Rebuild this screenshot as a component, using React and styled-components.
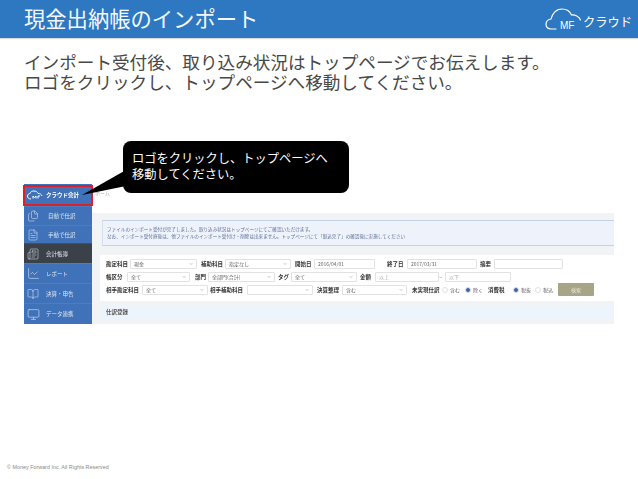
import React from 'react'
import styled, { createGlobalStyle } from 'styled-components'
import { Files, FileText, Newspaper, ChartLine, BookOpen, Monitor, ChevronDown } from 'lucide-react'

const GlobalStyle = createGlobalStyle`
  html, body { margin: 0; padding: 0; background: #fff; }
  body { font-family: "Noto Sans CJK JP", "Liberation Sans", sans-serif; }
`

const Slide = styled.div`
  width: 638px;
  height: 479px;
  display: flex;
  flex-direction: column;
  overflow: hidden;
`
const Header = styled.header`
  height: 38px;
  flex-shrink: 0;
  background: #2e78c2;
  display: flex;
  align-items: center;
  justify-content: space-between;
  padding: 0 6px 0 24px;
  box-shadow: 0 1px 1px rgba(0,0,0,.15);
`
const Title = styled.h1`
  margin: 0 0 3px;
  font-size: 21.3px;
  font-weight: 400;
  color: #f4f8fc;
  white-space: nowrap;
`
const Brand = styled.div`
  position: relative;
  width: 87px;
  height: 26px;
  color: #fff;
`
const BrandMf = styled.span`
  position: absolute;
  left: 15px;
  top: 14px;
  font: 400 10px/11px "Liberation Sans", sans-serif;
`
const BrandName = styled.span`
  position: absolute;
  left: 38px;
  top: 7px;
  font-size: 12.25px;
  line-height: 18px;
  white-space: nowrap;
`
const Lead = styled.p`
  margin: 14px 0 0 24px;
  font-size: 17.6px;
  line-height: 20px;
  color: #484848;
  white-space: nowrap;
`
const Stage = styled.div`
  position: relative;
  margin: 92px 0 0 24px;
  width: 590px;
`
const Shot = styled.div`
  display: flex;
  height: 140px;
  filter: blur(.55px);
`
const Sidebar = styled.nav`
  width: 68px;
  flex-shrink: 0;
  background: #3f72b8;
  display: flex;
  flex-direction: column;
`
const Logo = styled.div`
  height: 22px;
  display: flex;
  align-items: center;
  gap: 2px;
  padding-left: 3px;
  color: #fff;
  font-size: 5.5px;
  font-weight: 700;
  white-space: nowrap;
`
const NavItem = styled.div`
  height: ${({ $h }) => $h}px;
  display: flex;
  align-items: center;
  gap: ${({ $gap }) => $gap || 6}px;
  padding-left: 3px;
  font-size: 5.5px;
  color: #dfe8f5;
  white-space: nowrap;
  background: ${({ $active }) => ($active ? '#3b4149' : 'transparent')};
  border-top: 1px solid rgba(255,255,255,.08);
  box-sizing: border-box;
`
const Main = styled.main`
  flex: 1;
  display: flex;
  flex-direction: column;
  background: #f2f3f5;
`
const Crumb = styled.div`
  height: 29px;
  flex-shrink: 0;
  background: #fff;
  padding: 5px 0 0 3px;
  box-sizing: border-box;
  font-size: 5px;
  line-height: 7px;
  color: #aaa;
`
const Notice = styled.div`
  margin: 7px 0 9px 10px;
  height: 26px;
  box-sizing: border-box;
  border-top: 1px solid #c4d2e6;
  border-bottom: 1px solid #c4d2e6;
  border-left: 1px solid #d5dfee;
  background: #eef2fa;
  padding: 5px 0 0 4px;
  font-size: 4.6px;
  line-height: 7px;
  color: #5a6f96;
  white-space: nowrap;
`
const Form = styled.div`
  margin-left: 8px;
  height: 46px;
  flex-shrink: 0;
  box-sizing: border-box;
  background: #fff;
  padding: 3px 0 0 6px;
  display: flex;
  flex-direction: column;
  gap: 2px;
`
const Row = styled.div`
  height: 11px;
  display: flex;
  align-items: center;
`
const Label = styled.span`
  width: ${({ $w }) => $w}px;
  flex-shrink: 0;
  font-size: 5.5px;
  font-weight: 700;
  color: #333;
  white-space: nowrap;
`
const Field = styled.div`
  width: ${({ $w }) => $w}px;
  height: 10px;
  flex-shrink: 0;
  box-sizing: border-box;
  border: 1px solid #e2e2e2;
  border-radius: 1px;
  background: #fff;
  display: flex;
  align-items: center;
  justify-content: space-between;
  padding: 0 3px;
  margin-right: ${({ $mr }) => $mr || 0}px;
  font-size: 5px;
  color: ${({ $muted }) => ($muted ? '#b5b5b5' : '#666')};
  white-space: nowrap;
`
const Radio = styled.span`
  width: 6px;
  height: 6px;
  flex-shrink: 0;
  border-radius: 50%;
  box-sizing: border-box;
  border: 1px solid #e2e2e2;
  background: ${({ $on }) => ($on ? '#3a62a8' : '#fff')};
  margin-right: 2px;
`
const RadioText = styled.span`
  width: ${({ $w }) => $w}px;
  flex-shrink: 0;
  font-size: 5px;
  color: #666;
  white-space: nowrap;
`
const Search = styled.div`
  width: 36px;
  height: 13px;
  flex-shrink: 0;
  border-radius: 1px;
  background: #a8a488;
  color: #e8e6da;
  font-size: 5px;
  display: flex;
  align-items: center;
  justify-content: center;
`
const Register = styled.div`
  margin: 4px 0 3px 8px;
  height: 15px;
  flex-shrink: 0;
  background: #eef4fc;
  padding-left: 6px;
  font-size: 5.5px;
  font-weight: 700;
  line-height: 15px;
  color: #555;
`
const RedFrame = styled.div`
  position: absolute;
  left: -1px;
  top: 1px;
  width: 70px;
  height: 21px;
  box-sizing: border-box;
  border: 2px solid #d9212c;
`
const Callout = styled.div`
  position: absolute;
  left: 99px;
  top: -43px;
  width: 226px;
  height: 52px;
  box-sizing: border-box;
  padding: 9px 0 0 9px;
  background: #000;
  border-radius: 8px;
  color: #fff;
  font-size: 12.25px;
  line-height: 16px;
  white-space: nowrap;
`
const Tail = styled.svg`
  position: absolute;
  left: 58px;
  top: -14px;
`
const Footer = styled.footer`
  margin-top: auto;
  padding: 0 0 8px 7px;
  font: 5.4px/7px "Liberation Sans", sans-serif;
  color: #8a8a8a;
`

const Select = ({ w, value, mr }) => (
  <Field $w={w} $mr={mr}>
    <span>{value}</span>
    <ChevronDown size={4} strokeWidth={3} color="#888" />
  </Field>
)

const App = () => (
  <Slide>
    <GlobalStyle />
    <Header>
      <Title>現金出納帳のインポート</Title>
      <Brand>
        <svg width="38" height="26" viewBox="0 0 38 26" fill="none" stroke="#fff" strokeWidth="1.2" strokeLinecap="round">
          <path d="M11 23 H6 C3 23 1 21 1 18.500 C1 15.500 3 13.500 6 13 C7 8 11 3 17 3 C21.500 3 25 5.500 26.500 9 C30 8.500 34 10.500 35.500 14" />
        </svg>
        <BrandMf>MF</BrandMf>
        <BrandName>クラウド</BrandName>
      </Brand>
    </Header>
    <Lead>
      インポート受付後、取り込み状況はトップページでお伝えします。<br />
      ロゴをクリックし、トップページへ移動してください。
    </Lead>
    <Stage>
      <Shot>
        <Sidebar>
          <Logo>
            <svg width="17" height="10" viewBox="0 0 17 10" fill="none" stroke="#fff" strokeWidth="1">
              <path d="M4 9 C1.500 9 .5 7.500 .5 6 C.5 4.500 2 3.500 3 3.500 C3.500 1.800 5 1 7 1 C9 1 10.500 2 11 3.500 C13 3.300 14.500 4.500 15 6" />
              <path d="M6 8.500 V6 L7.500 7.500 L9 6 V8.500 M11 8.500 V6 H13" />
            </svg>
            クラウド会計
          </Logo>
          <NavItem $h={19} $gap={9}><Files size={12} strokeWidth={1.2} color="#cfdcf0" />自動で仕訳</NavItem>
          <NavItem $h={18} $gap={9}><FileText size={12} strokeWidth={1.2} color="#cfdcf0" />手動で仕訳</NavItem>
          <NavItem $h={20} $gap={7} $active><Newspaper size={12} strokeWidth={1.2} color="#cfd3d8" />会計帳簿</NavItem>
          <NavItem $h={20}><ChartLine size={13} strokeWidth={1.2} color="#cfdcf0" />レポート</NavItem>
          <NavItem $h={20} $gap={7}><BookOpen size={12} strokeWidth={1.2} color="#cfdcf0" />決算・申告</NavItem>
          <NavItem $h={21}><Monitor size={13} strokeWidth={1.2} color="#cfdcf0" />データ連携</NavItem>
        </Sidebar>
        <Main>
          <Crumb>ホーム</Crumb>
          <Notice>
            ファイルのインポート受付が完了しました。取り込み状況はトップページにてご確認いただけます。<br />
            なお、インポート受付直後は、他ファイルのインポート受付け・削除は出来ません。トップページにて「取込完了」の確認後に実施してください
          </Notice>
          <Form>
            <Row>
              <Label $w={24}>勘定科目</Label>
              <Select w={67} value="現金" mr={4} />
              <Label $w={24}>補助科目</Label>
              <Select w={66} value="指定なし" mr={4} />
              <Label $w={19}>開始日</Label>
              <Field $w={61} $mr={12}>2016/04/01</Field>
              <Label $w={20}>終了日</Label>
              <Field $w={70} $mr={3}>2017/03/31</Field>
              <Label $w={14}>摘要</Label>
              <Field $w={69} />
            </Row>
            <Row>
              <Label $w={21}>帳区分</Label>
              <Select w={63} value="全て" mr={5} />
              <Label $w={13}>部門</Label>
              <Select w={67} value="全部門(合計)" mr={3} />
              <Label $w={13}>タグ</Label>
              <Select w={66} value="全て" mr={3} />
              <Label $w={15}>金額</Label>
              <Field $w={64} $muted>以上</Field>
              <RadioText $w={6}>~</RadioText>
              <Field $w={66} $muted>以下</Field>
            </Row>
            <Row>
              <Label $w={36}>相手勘定科目</Label>
              <Select w={66} value="全て" mr={2} />
              <Label $w={37}>相手補助科目</Label>
              <Select w={66} mr={4} />
              <Label $w={25}>決算整理</Label>
              <Select w={65} value="含む" mr={5} />
              <Label $w={30}>未実現仕訳</Label>
              <Radio />
              <RadioText $w={15}>含む</RadioText>
              <Radio $on />
              <RadioText $w={15}>除く</RadioText>
              <Label $w={25}>消費税</Label>
              <Radio $on />
              <RadioText $w={14}>税抜</RadioText>
              <Radio />
              <RadioText $w={15}>税込</RadioText>
              <Search>検索</Search>
            </Row>
          </Form>
          <Register>仕訳登録</Register>
        </Main>
      </Shot>
      <RedFrame />
      <Tail width="66" height="26" viewBox="0 0 66 26"><polygon points="0,25 44,0 44,16" fill="#000" /></Tail>
      <Callout>
        ロゴをクリックし、トップページへ<br />
        移動してください。
      </Callout>
    </Stage>
    <Footer>© Money Forward Inc. All Rights Reserved</Footer>
  </Slide>
)

export default App
